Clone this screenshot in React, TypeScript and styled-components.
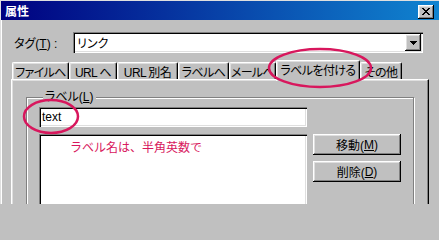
import styled, { createGlobalStyle } from "styled-components"

const GlobalStyle = createGlobalStyle`
  html, body {
    margin: 0;
    padding: 0;
    background: #c0c0c0;
  }
`

const Window = styled.div`
  position: relative;
  width: 439px;
  height: 204px;
  overflow: hidden;
  background: #c0c0c0;
  box-shadow: inset 1px 1px 0 #dfdfdf;
  font-family: "Liberation Sans", "Noto Sans CJK JP", sans-serif;
  font-size: 12px;
  color: #000;
  font-feature-settings: "palt";
`

const TitleBar = styled.div`
  height: 19px;
  margin: 1px 0 0 1px;
  padding: 0 5px 0 4px;
  display: flex;
  align-items: center;
  justify-content: space-between;
  background: linear-gradient(to right, #000080, #1084d0);
  color: #fff;
  font-weight: 700;
  font-size: 12px;
`

const Raised = `
  background: #c0c0c0;
  box-shadow: inset -1px -1px #000, inset 1px 1px #fff, inset -2px -2px #808080, inset 2px 2px #dfdfdf;
`

const Sunken = `
  background: #fff;
  box-shadow: inset 1px 1px #808080, inset 2px 2px #000, inset -1px -1px #fff, inset -2px -2px #dfdfdf;
`

const CloseButton = styled.div`
  ${Raised}
  width: 16px;
  height: 14px;
  box-sizing: border-box;
  display: flex;
  align-items: center;
  justify-content: center;
  margin-top: 2px;
`

const Body = styled.div`
  margin-left: 1px;
  border-left: 1px solid #fff;
  padding-top: 12px;
  height: 184px;
  box-sizing: border-box;
`

const TagRow = styled.div`
  display: flex;
  align-items: center;
  padding-left: 12px;
`

const FieldLabel = styled.div`
  width: 59px;
  white-space: nowrap;
`

const Combo = styled.div`
  ${Sunken}
  width: 350px;
  height: 21px;
  box-sizing: border-box;
  padding: 2px 2px 2px 4px;
  display: flex;
  align-items: center;
  justify-content: space-between;
`

const DropButton = styled.div`
  ${Raised}
  width: 16px;
  height: 17px;
  display: flex;
  align-items: center;
  justify-content: center;
`

const TabStrip = styled.div`
  margin-top: 7px;
  height: 19px;
  padding-left: 10px;
  display: flex;
  align-items: flex-end;
`

const Tab = styled.div<{ $w: number; $active?: boolean }>`
  box-sizing: border-box;
  width: ${p => p.$w}px;
  height: ${p => (p.$active ? 21 : 17)}px;
  margin-bottom: ${p => (p.$active ? -2 : 0)}px;
  padding-bottom: ${p => (p.$active ? 4 : 0)}px;
  position: relative;
  z-index: ${p => (p.$active ? 1 : 0)};
  background: #c0c0c0;
  border-top: 1px solid #fff;
  border-left: 1px solid #fff;
  border-right: 1px solid #000;
  border-radius: 2px 2px 0 0;
  box-shadow: inset -1px 0 #808080, inset 1px 1px #dfdfdf;
  display: flex;
  align-items: center;
  justify-content: center;
  white-space: nowrap;
  letter-spacing: -0.6px;
`

const Panel = styled.div`
  margin-left: 9px;
  width: 418px;
  height: 140px;
  box-sizing: border-box;
  border-top: 1px solid #fff;
  border-left: 1px solid #fff;
  border-right: 1px solid #000;
  box-shadow: inset -1px 0 #808080, inset 1px 1px #dfdfdf;
  display: flow-root;
`

const GroupBox = styled.fieldset`
  box-sizing: border-box;
  width: 388px;
  margin: 11px 0 0 14px;
  padding: 3px 0 0 12px;
  border: 1px solid #808080;
  box-shadow: inset 1px 1px #fff, 1px 1px #fff;
  min-inline-size: 0;
`

const Legend = styled.legend`
  padding: 0 2px;
  margin-left: 4px;
  line-height: 13px;
  background: #c0c0c0;
`

const FormGrid = styled.div`
  display: grid;
  grid-template-columns: 268px 88px;
  column-gap: 6px;
  row-gap: 7px;
`

const TextBox = styled.div`
  ${Sunken}
  height: 20px;
  box-sizing: border-box;
  padding-left: 3px;
  display: flex;
  align-items: center;
  font-size: 12px;
`

const ListBox = styled.div`
  ${Sunken}
  height: 100px;
  box-sizing: border-box;
  padding: 8px 0 0 31px;
`

const Note = styled.div`
  color: #d8175d;
  line-height: 12px;
  font-feature-settings: normal;
  white-space: nowrap;
`

const ButtonColumn = styled.div`
  display: flex;
  flex-direction: column;
  gap: 6px;
`

const Button = styled.div`
  ${Raised}
  height: 21px;
  box-sizing: border-box;
  display: flex;
  align-items: center;
  justify-content: center;
  white-space: nowrap;
`

const Annotations = styled.svg`
  position: absolute;
  top: 0;
  left: 0;
  pointer-events: none;
  z-index: 5;
`

const tabs = [
  { label: "ファイルへ", w: 57 },
  { label: "URL へ", w: 48 },
  { label: "URL 別名", w: 61 },
  { label: "ラベルへ", w: 51 },
  { label: "メールへ", w: 47 },
  { label: "ラベルを付ける", w: 84, active: true },
  { label: "その他", w: 42 },
]

export default function App() {
  return (
    <>
      <GlobalStyle />
      <Window>
        <TitleBar>
          <span>属性</span>
          <CloseButton>
            <svg width="8" height="7" viewBox="0 0 8 7">
              <path
                d="M0 0h2v1h1v1h2V1h1V0h2v1H7v1H6v1H5v1h1v1h1v1h1v1H6V6H5V5H3v1H2v1H0V6h1V5h1V4h1V3H2V2H1V1H0z"
                fill="#000"
              />
            </svg>
          </CloseButton>
        </TitleBar>
        <Body>
          <TagRow>
            <FieldLabel>
              タグ(<u>T</u>) :
            </FieldLabel>
            <Combo>
              <span>リンク</span>
              <DropButton>
                <svg width="7" height="4" viewBox="0 0 7 4">
                  <path d="M0 0h7v1H6v1H5v1H4v1H3V3H2V2H1V1H0z" fill="#000" />
                </svg>
              </DropButton>
            </Combo>
          </TagRow>
          <TabStrip>
            {tabs.map(t => (
              <Tab key={t.label} $w={t.w} $active={t.active}>
                {t.label}
              </Tab>
            ))}
          </TabStrip>
          <Panel>
            <GroupBox>
              <Legend>
                ラベル(<u>L</u>)
              </Legend>
              <FormGrid>
                <TextBox>text</TextBox>
                <div />
                <ListBox>
                  <Note>ラベル名は、半角英数で</Note>
                </ListBox>
                <ButtonColumn>
                  <Button>
                    移動(<u>M</u>)
                  </Button>
                  <Button>
                    削除(<u>D</u>)
                  </Button>
                </ButtonColumn>
              </FormGrid>
            </GroupBox>
          </Panel>
        </Body>
        <Annotations width="439" height="204" viewBox="0 0 439 204">
          <ellipse cx="320" cy="68" rx="51" ry="19" fill="none" stroke="#d8175d" strokeWidth="2.5" />
          <ellipse cx="51" cy="116.5" rx="27" ry="16.5" fill="none" stroke="#d8175d" strokeWidth="2.5" />
        </Annotations>
      </Window>
    </>
  )
}
